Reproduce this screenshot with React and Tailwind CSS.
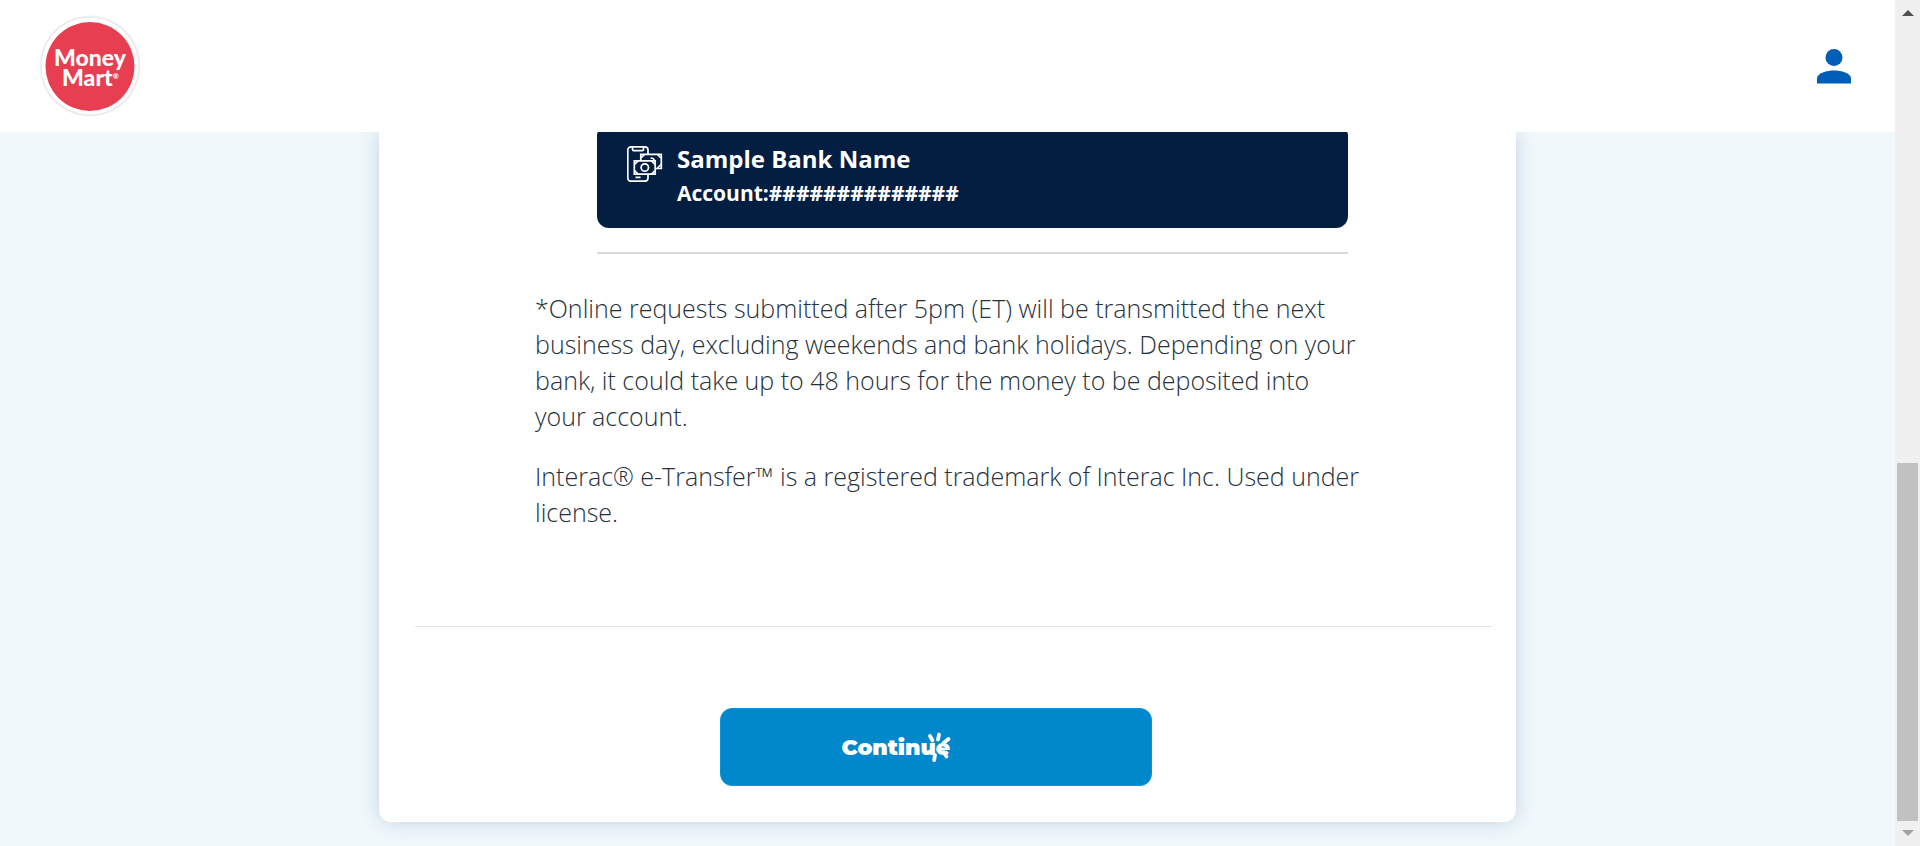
function Logo() {
  return (
    <a href="#home" aria-label="Money Mart" className="block">
      <svg viewBox="0 0 104 104" className="size-26">
        <circle cx="52" cy="52" r="50.5" fill="#f4f4f4" />
        <circle cx="52" cy="52" r="49.5" fill="#e6e6e6" />
        <circle cx="52" cy="52" r="48.5" fill="#fff" />
        <circle cx="52" cy="52.500" r="44.500" fill="#e83e52" />
        <text fill="#fff" fontFamily="Lato, 'Open Sans', sans-serif" fontWeight="900" fontSize="23">
          <tspan x="16" y="52">Money</tspan>
          <tspan x="24" y="72">Mart</tspan>
          <tspan x="75" y="65" fontSize="7">®</tspan>
        </text>
      </svg>
    </a>
  );
}

function PersonIcon() {
  return (
    <svg viewBox="0 0 34 35" className="h-[35px] w-[34px]" fill="#005eb8" aria-hidden="true">
      <circle cx="17" cy="8.6" r="8.5" />
      <path d="M0 34.500v-5.200C0 24 10 21.400 17 21.400S34 24 34 29.300v5.200z" />
    </svg>
  );
}

function PhoneMoneyIcon() {
  return (
    <svg viewBox="0 0 36 36" className="size-9 shrink-0" fill="none" stroke="#fff" strokeWidth="1.7" aria-hidden="true">
      <path d="M21 28v4a3.200 3.200 0 0 1-3.200 3.200H4A3.200 3.200 0 0 1 .8 32V4A3.200 3.200 0 0 1 4 .8h13.800A3.200 3.200 0 0 1 21 4v4" />
      <path d="M5.500 1v2.500q0 1.200 1.200 1.200h8.600q1.200 0 1.200-1.200V1M8.500 31.300h5" />
      <path d="M13.800 14V8.300h20.500v14.200H28.500" />
      <path d="M7.300 14.800h20.900v13.400H7.300z" />
      <circle cx="17.800" cy="21.500" r="3.700" />
      <path d="M7.500 18.500l3.500-3.500M24.500 15l3.500 3.500M7.500 24.500l3.500 3.500M24.500 28l3.500-3.500M14 12l3.500-3.500M30.500 8.500l3.500 3.500M30.500 22l3.500-3.500M23.500 12q4 0 4.500 4" />
    </svg>
  );
}

function Spinner() {
  return (
    <svg viewBox="0 0 32 32" className="absolute top-1/2 -right-1 size-8 -translate-y-1/2" fill="none" stroke="#fff" strokeWidth="3.800" strokeLinecap="round" aria-hidden="true">
      <path d="M8 5l2.500 4.500M17 3.500l-1 5M26.500 8l-5 4M21.500 21l3 4.500M13 24l-.8 5M5.500 22l4-2" />
    </svg>
  );
}

function ScrollTrack() {
  return (
    <div className="flex w-[25px] shrink-0 flex-col items-center bg-[#f0f0f0] py-2" aria-hidden="true">
      <svg viewBox="0 0 12 10" className="h-2.5 w-3"><path d="M0 8L6 2l6 6z" fill="#505050" /></svg>
      <div className="grow-[445]" />
      <div className="w-[21px] grow-[358] bg-[#c1c1c1]" />
      <svg viewBox="0 0 12 17" className="h-[17px] w-3"><path d="M0 9h12l-6 6z" fill="#a3a3a3" /></svg>
    </div>
  );
}

export default function App() {
  return (
    <div className="flex h-screen overflow-hidden bg-[#f0f8fc] font-['Open_Sans',sans-serif]">
      <div className="flex min-w-0 grow flex-col">
        <header className="z-10 flex h-33 shrink-0 items-center justify-between bg-white pr-11 pl-[38px]">
          <Logo />
          <button type="button" aria-label="Account">
            <PersonIcon />
          </button>
        </header>

        <main className="flex grow justify-center pb-6">
          <section className="flex w-3/5 flex-col rounded-b-xl bg-white pr-6 pb-9 pl-9 text-[#26323b] shadow-[0_0_20px_rgba(0,60,110,0.2)]">
            <div className="pr-[132px] pl-[120px]">
              <div className="pr-3 pl-[62px]">
                <div className="-mt-2 flex gap-[14px] rounded-xl bg-[#041e42] px-[30px] pt-[17px] pb-[19px] font-bold text-white">
                  <div className="pt-[5px]">
                    <PhoneMoneyIcon />
                  </div>
                  <div>
                    <h2 className="text-2xl leading-9">Sample Bank Name</h2>
                    <p className="text-[21px] leading-8">Account:##############</p>
                  </div>
                </div>
                <hr className="mt-6 border-t-2 border-[#d9d9d9]" />
              </div>
              <div className="mt-9 flex flex-col gap-6 text-[25px] leading-9 font-light">
                <p>
                  *Online requests submitted after 5pm (ET) will be transmitted the next business day, excluding
                  weekends and bank holidays. Depending on your bank, it could take up to 48 hours for the money to be
                  deposited into your account.
                </p>
                <p>Interac® e-Transfer™ is a registered trademark of Interac Inc. Used under license.</p>
              </div>
            </div>
            <hr className="mt-24 border-[#e4e4e4]" />
            <div className="flex justify-center pt-[81px] pr-9">
              <button
                type="button"
                className="flex h-[78px] w-[432px] items-center rounded-xl border border-[#0a94da] bg-[#0087cc] pl-[121px] text-[22px] font-black text-white"
              >
                <span className="relative font-[Montserrat,Lato,sans-serif]">
                  Continue
                  <Spinner />
                </span>
              </button>
            </div>
          </section>
        </main>
      </div>
      <ScrollTrack />
    </div>
  );
}
